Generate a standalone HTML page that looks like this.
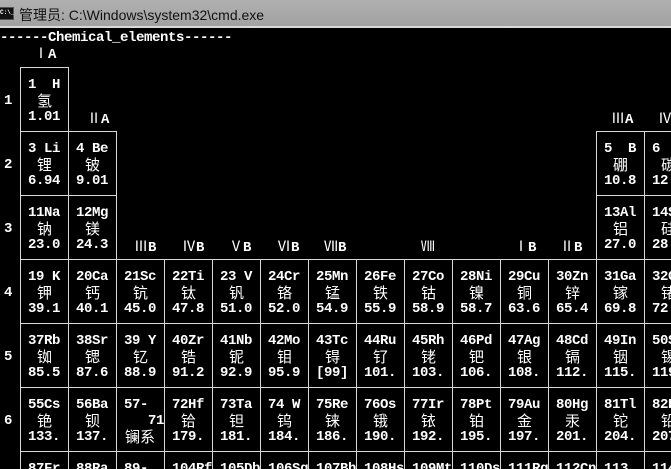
<!DOCTYPE html>
<html><head><meta charset="utf-8"><style>
html,body{margin:0;padding:0;width:671px;height:469px;overflow:hidden;background:#000;position:relative;}
#tb{position:absolute;left:0;top:0;width:671px;height:26px;background:linear-gradient(#b0b0b0,#a2a2a2);border-bottom:2px solid #d8d8d8;}
#tb .ic{position:absolute;left:0;top:7px;width:13px;height:11px;background:#111;border:1px solid #555;border-left:none;}
#tb .ic:after{content:"C:\\_";position:absolute;left:0;top:1px;font:bold 6px "Liberation Mono",monospace;color:#fff;}
#tb .t{position:absolute;left:19px;top:5px;font:14px "Liberation Sans","Noto Sans CJK SC",sans-serif;color:#111;}
.m{position:absolute;font:bold 14px/16px "Liberation Mono","Noto Sans CJK SC",monospace;letter-spacing:-0.4px;color:#fff;white-space:pre;}
.c{position:absolute;width:49px;height:65px;box-sizing:border-box;border:1px solid #d8d8d8;padding:9px 0 0 7px;}
.c.l{height:30px;}
.c b,.c i{display:block;height:16px;font:bold 14px/16px "Liberation Mono",monospace;letter-spacing:-0.4px;color:#fff;white-space:pre;font-style:normal;}
.c i{font:15px/16px "WenQuanYi Zen Hei","Noto Sans CJK SC",sans-serif;letter-spacing:0;text-align:center;margin-left:-7px;}
.r{position:absolute;left:4px;font:bold 14px/16px "Liberation Mono",monospace;color:#fff;}
.g{position:absolute;font:bold 14px/16px "Liberation Mono","Noto Sans CJK SC",monospace;color:#fff;white-space:pre;}
.g span{font:14px/16px "Noto Sans CJK SC",sans-serif;font-weight:normal;}
</style></head><body>
<div id="tb"><div class="ic"></div><div class="t">管理员: C:\Windows\system32\cmd.exe</div></div>
<div class="m" style="left:0;top:30px">------Chemical_elements------</div>
<div class="g" style="left:34px;top:45px"><span>Ⅰ</span>A</div>
<div class="g" style="left:87px;top:110px"><span>Ⅱ</span>A</div>
<div class="g" style="left:611px;top:110px"><span>Ⅲ</span>A</div>
<div class="g" style="left:658px;top:110px"><span>Ⅳ</span>A</div>
<div class="g" style="left:134px;top:238px"><span>Ⅲ</span>B</div>
<div class="g" style="left:182px;top:238px"><span>Ⅳ</span>B</div>
<div class="g" style="left:229px;top:238px"><span>Ⅴ</span>B</div>
<div class="g" style="left:277px;top:238px"><span>Ⅵ</span>B</div>
<div class="g" style="left:324px;top:238px"><span>Ⅶ</span>B</div>
<div class="g" style="left:421px;top:238px"><span>Ⅷ</span></div>
<div class="g" style="left:514px;top:238px"><span>Ⅰ</span>B</div>
<div class="g" style="left:560px;top:238px"><span>Ⅱ</span>B</div>

<div class="r" style="top:93px">1</div>
<div class="r" style="top:157px">2</div>
<div class="r" style="top:221px">3</div>
<div class="r" style="top:285px">4</div>
<div class="r" style="top:349px">5</div>
<div class="r" style="top:413px">6</div>

<div class="c" style="left:20px;top:67px"><b>1  H</b><i>氢</i><b>1.01</b></div>

<div class="c" style="left:20px;top:131px"><b>3 Li</b><i>锂</i><b>6.94</b></div>
<div class="c" style="left:68px;top:131px"><b>4 Be</b><i>铍</i><b>9.01</b></div>
<div class="c" style="left:596px;top:131px"><b>5  B</b><i>硼</i><b>10.8</b></div>
<div class="c" style="left:644px;top:131px"><b>6  C</b><i>碳</i><b>12.0</b></div>

<div class="c" style="left:20px;top:195px"><b>11Na</b><i>钠</i><b>23.0</b></div>
<div class="c" style="left:68px;top:195px"><b>12Mg</b><i>镁</i><b>24.3</b></div>
<div class="c" style="left:596px;top:195px"><b>13Al</b><i>铝</i><b>27.0</b></div>
<div class="c" style="left:644px;top:195px"><b>14Si</b><i>硅</i><b>28.1</b></div>

<div class="c" style="left:20px;top:259px"><b>19 K</b><i>钾</i><b>39.1</b></div>
<div class="c" style="left:68px;top:259px"><b>20Ca</b><i>钙</i><b>40.1</b></div>
<div class="c" style="left:116px;top:259px"><b>21Sc</b><i>钪</i><b>45.0</b></div>
<div class="c" style="left:164px;top:259px"><b>22Ti</b><i>钛</i><b>47.8</b></div>
<div class="c" style="left:212px;top:259px"><b>23 V</b><i>钒</i><b>51.0</b></div>
<div class="c" style="left:260px;top:259px"><b>24Cr</b><i>铬</i><b>52.0</b></div>
<div class="c" style="left:308px;top:259px"><b>25Mn</b><i>锰</i><b>54.9</b></div>
<div class="c" style="left:356px;top:259px"><b>26Fe</b><i>铁</i><b>55.9</b></div>
<div class="c" style="left:404px;top:259px"><b>27Co</b><i>钴</i><b>58.9</b></div>
<div class="c" style="left:452px;top:259px"><b>28Ni</b><i>镍</i><b>58.7</b></div>
<div class="c" style="left:500px;top:259px"><b>29Cu</b><i>铜</i><b>63.6</b></div>
<div class="c" style="left:548px;top:259px"><b>30Zn</b><i>锌</i><b>65.4</b></div>
<div class="c" style="left:596px;top:259px"><b>31Ga</b><i>镓</i><b>69.8</b></div>
<div class="c" style="left:644px;top:259px"><b>32Ge</b><i>锗</i><b>72.6</b></div>

<div class="c" style="left:20px;top:323px"><b>37Rb</b><i>铷</i><b>85.5</b></div>
<div class="c" style="left:68px;top:323px"><b>38Sr</b><i>锶</i><b>87.6</b></div>
<div class="c" style="left:116px;top:323px"><b>39 Y</b><i>钇</i><b>88.9</b></div>
<div class="c" style="left:164px;top:323px"><b>40Zr</b><i>锆</i><b>91.2</b></div>
<div class="c" style="left:212px;top:323px"><b>41Nb</b><i>铌</i><b>92.9</b></div>
<div class="c" style="left:260px;top:323px"><b>42Mo</b><i>钼</i><b>95.9</b></div>
<div class="c" style="left:308px;top:323px"><b>43Tc</b><i>锝</i><b>[99]</b></div>
<div class="c" style="left:356px;top:323px"><b>44Ru</b><i>钌</i><b>101.</b></div>
<div class="c" style="left:404px;top:323px"><b>45Rh</b><i>铑</i><b>103.</b></div>
<div class="c" style="left:452px;top:323px"><b>46Pd</b><i>钯</i><b>106.</b></div>
<div class="c" style="left:500px;top:323px"><b>47Ag</b><i>银</i><b>108.</b></div>
<div class="c" style="left:548px;top:323px"><b>48Cd</b><i>镉</i><b>112.</b></div>
<div class="c" style="left:596px;top:323px"><b>49In</b><i>铟</i><b>115.</b></div>
<div class="c" style="left:644px;top:323px"><b>50Sn</b><i>锡</i><b>119.</b></div>

<div class="c" style="left:20px;top:387px"><b>55Cs</b><i>铯</i><b>133.</b></div>
<div class="c" style="left:68px;top:387px"><b>56Ba</b><i>钡</i><b>137.</b></div>
<div class="c" style="left:116px;top:387px"><b>57-</b><b>   71</b><i style="text-align:left;margin-left:1px">镧系</i></div>
<div class="c" style="left:164px;top:387px"><b>72Hf</b><i>铪</i><b>179.</b></div>
<div class="c" style="left:212px;top:387px"><b>73Ta</b><i>钽</i><b>181.</b></div>
<div class="c" style="left:260px;top:387px"><b>74 W</b><i>钨</i><b>184.</b></div>
<div class="c" style="left:308px;top:387px"><b>75Re</b><i>铼</i><b>186.</b></div>
<div class="c" style="left:356px;top:387px"><b>76Os</b><i>锇</i><b>190.</b></div>
<div class="c" style="left:404px;top:387px"><b>77Ir</b><i>铱</i><b>192.</b></div>
<div class="c" style="left:452px;top:387px"><b>78Pt</b><i>铂</i><b>195.</b></div>
<div class="c" style="left:500px;top:387px"><b>79Au</b><i>金</i><b>197.</b></div>
<div class="c" style="left:548px;top:387px"><b>80Hg</b><i>汞</i><b>201.</b></div>
<div class="c" style="left:596px;top:387px"><b>81Tl</b><i>铊</i><b>204.</b></div>
<div class="c" style="left:644px;top:387px"><b>82Pb</b><i>铅</i><b>207.</b></div>

<div class="c l" style="left:20px;top:451px"><b>87Fr</b></div>
<div class="c l" style="left:68px;top:451px"><b>88Ra</b></div>
<div class="c l" style="left:116px;top:451px"><b>89-</b></div>
<div class="c l" style="left:164px;top:451px"><b>104Rf</b></div>
<div class="c l" style="left:212px;top:451px"><b>105Db</b></div>
<div class="c l" style="left:260px;top:451px"><b>106Sg</b></div>
<div class="c l" style="left:308px;top:451px"><b>107Bh</b></div>
<div class="c l" style="left:356px;top:451px"><b>108Hs</b></div>
<div class="c l" style="left:404px;top:451px"><b>109Mt</b></div>
<div class="c l" style="left:452px;top:451px"><b>110Ds</b></div>
<div class="c l" style="left:500px;top:451px"><b>111Rg</b></div>
<div class="c l" style="left:548px;top:451px"><b>112Cn</b></div>
<div class="c l" style="left:596px;top:451px"><b>113</b></div>
<div class="c l" style="left:644px;top:451px"><b>114</b></div>
</body></html>
